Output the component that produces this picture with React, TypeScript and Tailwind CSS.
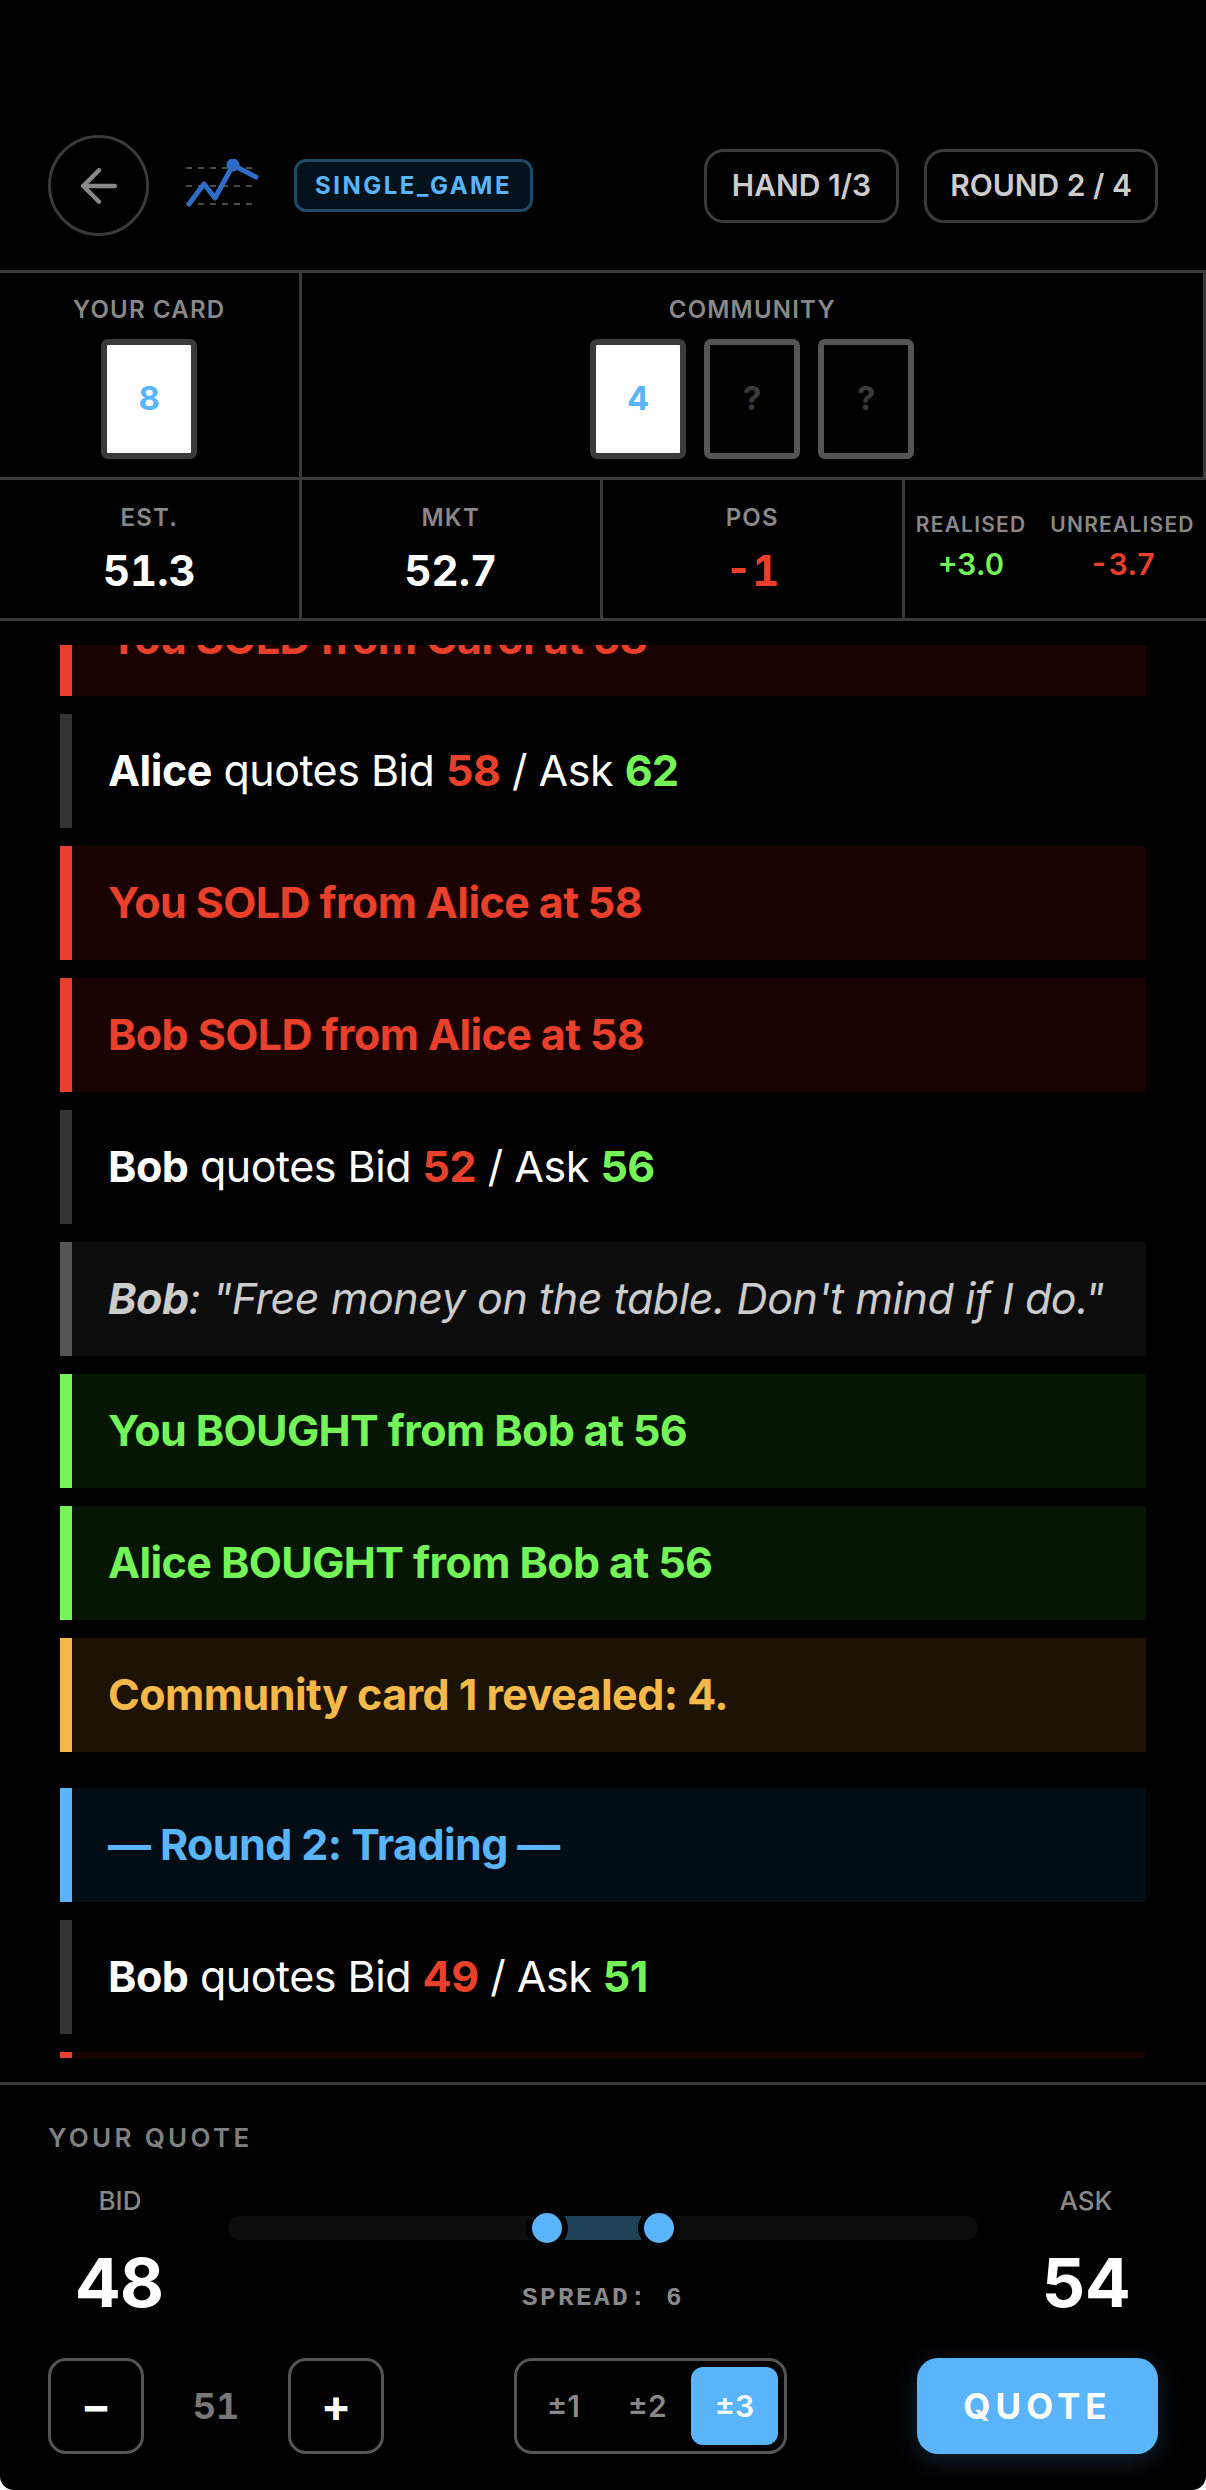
import { ArrowLeft } from "lucide-react";

const GREEN = "text-[#74f458]";
const RED = "text-[#e8402a]";

const Logo = () => (
  <svg width="76" height="54" viewBox="0 0 76 54" fill="none" className="shrink-0">
    <path d="M2 9H72M2 27H72M2 45H72" stroke="#4a4a4a" strokeWidth="2" strokeDasharray="6 6" />
    <path d="M5 45L20 25L31 39L49 6L72 18" stroke="#2f6cc6" strokeWidth="5" strokeLinecap="round" strokeLinejoin="round" />
    <circle cx="49" cy="6" r="6.5" fill="#2f6cc6" />
  </svg>
);

const Card = ({ value }: { value?: string }) => (
  value ? (
    <div className="w-[96px] h-[120px] rounded-[7px] border-[6px] border-[#3a3a3a] bg-white flex items-center justify-center text-[33px] font-bold text-[#5ab4fa]">
      {value}
    </div>
  ) : (
    <div className="w-[96px] h-[120px] rounded-[7px] border-[6px] border-[#555555] bg-black flex items-center justify-center text-[33px] font-bold text-[#3a3a3a]">
      ?
    </div>
  )
);

const Label = ({ children }: { children: React.ReactNode }) => (
  <div className="text-[24px] leading-[36px] font-semibold tracking-[1.2px] text-[#888888]">{children}</div>
);

const Stat = ({ label, value, color }: { label: string; value: string; color: string }) => (
  <div className="border-r-[3px] border-[#3a3a3a] flex flex-col items-center pt-[20px]">
    <Label>{label}</Label>
    <div className={`mt-[3px] text-[42px] leading-[64px] font-bold tabular-nums ${color}`}>{value}</div>
  </div>
);

const Row = ({ className, children }: { className: string; children: React.ReactNode }) => (
  <div className={`shrink-0 border-l-[12px] pl-[36px] pt-[29px] pb-[31px] text-[43px] leading-[54px] whitespace-nowrap ${className}`}>
    {children}
  </div>
);

const Quote = ({ name, bid, ask }: { name: string; bid: number; ask: number }) => (
  <Row className="border-[#333333] text-white tracking-[-0.5px]">
    <b className="font-bold">{name}</b> quotes Bid <b className={`font-bold ${RED}`}>{bid}</b> / Ask{" "}
    <b className={`font-bold ${GREEN}`}>{ask}</b>
  </Row>
);

const Sold = ({ text }: { text: string }) => (
  <Row className="border-[#e8402a] bg-[#190201] text-[#e8402a] font-bold tracking-[-0.6px]">{text}</Row>
);

const Bought = ({ text }: { text: string }) => (
  <Row className="border-[#74f458] bg-[#061504] text-[#74f458] font-bold tracking-[-0.6px]">{text}</Row>
);

const Side = ({ label, value }: { label: string; value: number }) => (
  <div className="w-[144px] shrink-0 flex flex-col items-center">
    <div className="text-[26px] leading-[36px] font-medium text-[#888888]">{label}</div>
    <div className="mt-[27px] text-[68px] leading-[72px] font-bold tabular-nums text-white">{value}</div>
  </div>
);

const Step = ({ children }: { children: string }) => (
  <button className="w-[96px] h-[96px] rounded-[18px] border-[3px] border-[#555555] flex items-center justify-center text-[45px] font-bold text-white">
    {children}
  </button>
);

export default function App() {
  return (
    <div className="h-[2490px] bg-white overflow-hidden">
      <div className="h-full bg-black rounded-b-[14px] overflow-hidden flex flex-col font-['Inter',sans-serif]">
        <header className="pt-[135px] pb-[34px] px-[48px] flex items-center">
          <button className="w-[101px] h-[101px] shrink-0 rounded-full border-[3px] border-[#3a3a3a] flex items-center justify-center text-[#888888]">
            <ArrowLeft size={54} strokeWidth={2} />
          </button>
          <div className="ml-[35px]"><Logo /></div>
          <div className="ml-[34px] h-[53px] px-[18px] rounded-[12px] border-[3px] border-[#1f4a66] bg-[#04121c] flex items-center text-[24px] font-bold tracking-[2.5px] text-[#5ab4fa]">
            SINGLE_GAME
          </div>
          <div className="ml-auto flex gap-[25px]">
            <div className="h-[74px] px-[25px] rounded-[20px] border-[3px] border-[#3a3a3a] flex items-center text-[30px] font-semibold text-[#cccccc]">HAND 1/3</div>
            <div className="h-[74px] px-[23px] rounded-[20px] border-[3px] border-[#3a3a3a] flex items-center text-[30px] font-semibold text-[#cccccc]">ROUND 2 / 4</div>
          </div>
        </header>

        <section className="grid grid-cols-4 border-y-[3px] border-[#3a3a3a]">
          <div className="border-r-[3px] border-[#3a3a3a] flex flex-col items-center pt-[19px] pb-[18px]">
            <Label>YOUR CARD</Label>
            <div className="mt-[11px]"><Card value="8" /></div>
          </div>
          <div className="col-span-3 border-r-[3px] border-[#3a3a3a] flex flex-col items-center pt-[19px] pb-[18px]">
            <Label>COMMUNITY</Label>
            <div className="mt-[11px] flex gap-[18px]">
              <Card value="4" />
              <Card />
              <Card />
            </div>
          </div>
        </section>

        <section className="h-[141px] shrink-0 grid grid-cols-4 border-b-[3px] border-[#3a3a3a]">
          <Stat label="EST." value="51.3" color="text-white" />
          <Stat label="MKT" value="52.7" color="text-white" />
          <Stat label="POS" value="-1" color={RED} />
          <div className="flex justify-center gap-[24px] pt-[30px]">
            <div className="flex flex-col items-center">
              <div className="text-[21px] leading-[30px] font-semibold tracking-[1.2px] text-[#888888]">REALISED</div>
              <div className={`mt-[4px] text-[30px] leading-[40px] font-semibold tabular-nums ${GREEN}`}>+3.0</div>
            </div>
            <div className="flex flex-col items-center">
              <div className="text-[21px] leading-[30px] font-semibold tracking-[1.2px] text-[#888888]">UNREALISED</div>
              <div className={`mt-[4px] text-[30px] leading-[40px] font-semibold tabular-nums ${RED}`}>-3.7</div>
            </div>
          </div>
        </section>

        <div className="flex-1 min-h-0 py-[24px] pl-[60px] pr-[60px]">
          <div className="h-full overflow-hidden flex flex-col gap-[18px]">
            <div className="-mt-[63px]"><Sold text="You SOLD from Carol at 58" /></div>
            <Quote name="Alice" bid={58} ask={62} />
            <Sold text="You SOLD from Alice at 58" />
            <Sold text="Bob SOLD from Alice at 58" />
            <Quote name="Bob" bid={52} ask={56} />
            <Row className="border-[#555555] bg-[#0c0c0c] text-[#cccccc] italic tracking-[-0.45px]">
              <b className="font-bold">Bob</b>: "Free money on the table. Don't mind if I do."
            </Row>
            <Bought text="You BOUGHT from Bob at 56" />
            <Bought text="Alice BOUGHT from Bob at 56" />
            <Row className="border-[#f5b94a] bg-[#1c1305] text-[#f5b94a] font-bold tracking-[-0.55px]">Community card 1 revealed: 4.</Row>
            <Row className="mt-[18px] border-[#5ab4fa] bg-[#020c14] text-[#5ab4fa] font-bold tracking-[-0.6px]">— Round 2: Trading —</Row>
            <Quote name="Bob" bid={49} ask={51} />
            <Sold text="You SOLD from Bob at 49" />
          </div>
        </div>

        <section className="h-[408px] shrink-0 border-t-[3px] border-[#3a3a3a] px-[48px] pt-[35px]">
          <div className="text-[26px] leading-[36px] font-semibold tracking-[3.3px] text-[#808080]">YOUR QUOTE</div>
          <div className="mt-[27px] flex gap-[36px]">
            <Side label="BID" value={48} />
            <div className="flex-1 flex flex-col items-center pt-[33px]">
              <div className="relative w-full h-[24px] rounded-full bg-[#0d0d0d]">
                <div className="absolute left-[319px] w-[112px] h-full bg-[#1f4257]" />
                <div className="absolute left-[304px] -top-[3px] w-[30px] h-[30px] rounded-full bg-[#5ab4fa] shadow-[0_0_0_6px_#000]" />
                <div className="absolute left-[416px] -top-[3px] w-[30px] h-[30px] rounded-full bg-[#5ab4fa] shadow-[0_0_0_6px_#000]" />
              </div>
              <div className="mt-[40px] text-[26px] leading-[36px] font-bold tracking-[2.4px] whitespace-pre text-[#888888] font-['Liberation_Mono',monospace]">SPREAD: 6</div>
            </div>
            <Side label="ASK" value={54} />
          </div>
          <div className="mt-[40px] flex items-start justify-between">
            <div className="w-[336px] flex items-center">
              <Step>−</Step>
              <div className="flex-1 text-center text-[36px] font-bold tabular-nums text-[#777777]">51</div>
              <Step>+</Step>
            </div>
            <div className="h-[96px] rounded-[18px] border-[3px] border-[#555555] p-[6px] flex text-[30px] font-semibold text-[#888888]">
              <div className="px-[24px] flex items-center">±1</div>
              <div className="px-[24px] flex items-center">±2</div>
              <div className="px-[24px] flex items-center rounded-[12px] bg-[#5ab4fa] text-white">±3</div>
            </div>
            <button className="w-[241px] h-[96px] rounded-[21px] bg-[#5ab4fa] shadow-[0_6px_24px_rgba(90,180,250,0.2)] text-[35px] font-bold tracking-[5px] text-white">
              QUOTE
            </button>
          </div>
        </section>
      </div>
    </div>
  );
}
